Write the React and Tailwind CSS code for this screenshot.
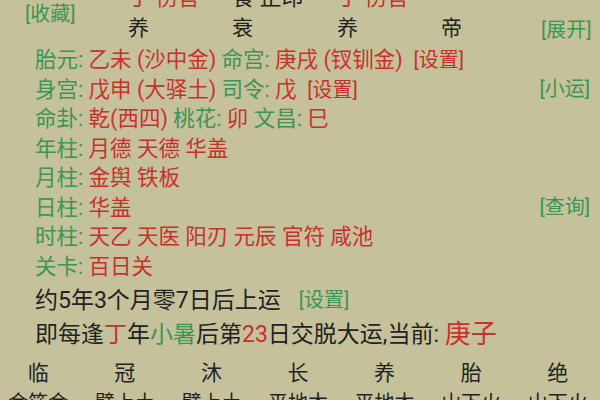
import React from "react";

const G = "text-[#3b9553]";
const R = "text-[#c9302b]";
const K = "text-[#222222]";

function Link({ children, className = "" }) {
  return <span className={`text-[20px] ${G} ${className}`}>[{children}]</span>;
}

function Row({ children, right }) {
  return (
    <div className="h-[29.5px] flex items-center justify-between pl-[35px] pr-[10px] leading-none text-[21.5px]">
      <div className="whitespace-pre">{children}</div>
      {right}
    </div>
  );
}

function L({ children }) {
  return <span className={G}>{children}</span>;
}
function V({ children }) {
  return <span className={R}>{children}</span>;
}

export default function App() {
  const pillars = [
    { top: "丁 伤官", topC: R, bot: "养" },
    { top: "食 正印", topC: K, bot: "衰" },
    { top: "丁 伤官", topC: R, bot: "养" },
    { top: "", topC: K, bot: "帝" },
  ];
  const stages = ["临", "冠", "沐", "长", "养", "胎", "绝"];
  const nayin = ["金箔金", "壁上土", "壁上土", "平地木", "平地木", "山下火", "山下火"];
  return (
    <div className="w-[600px] h-[400px] overflow-hidden bg-[#c5c29b] font-['Roboto','Noto_Sans_CJK_SC',sans-serif] text-[23px]">
      {/* header */}
      <div className="h-[45px] flex">
        <div className="w-[128px] pl-[25px] pt-[4px] leading-[20px]">
          <Link>收藏</Link>
        </div>
        {pillars.map((p, i) => (
          <div key={i} className={`${i === 3 ? "w-[100px]" : i === 1 ? "w-[105px]" : "w-[104px]"} flex flex-col`}>
            <div className={`-mt-[17px] h-[30px] leading-[30px] text-[22px] whitespace-nowrap ${p.topC}`}>{p.top}</div>
            <div className={`h-[30px] leading-[30px] text-[21px] ${K}`}>{p.bot}</div>
          </div>
        ))}
        <div className="pt-[20px] leading-[20px]">
          <Link>展开</Link>
        </div>
      </div>

      <Row>
        <L>胎元: </L>
        <V>乙未 (沙中金) </V>
        <L>命宫: </L>
        <V>庚戌 (钗钏金)  </V>
        <span className={`text-[20px] ${R}`}>[设置]</span>
      </Row>
      <Row right={<Link>小运</Link>}>
        <L>身宫: </L>
        <V>戊申 (大驿土) </V>
        <L>司令: </L>
        <V>戊  </V>
        <span className={`text-[20px] ${R}`}>[设置]</span>
      </Row>
      <Row>
        <L>命卦: </L>
        <V>乾(西四) </V>
        <L>桃花: </L>
        <V>卯 </V>
        <L>文昌: </L>
        <V>巳</V>
      </Row>
      <Row>
        <L>年柱: </L>
        <V>月德 天德 华盖</V>
      </Row>
      <Row>
        <L>月柱: </L>
        <V>金舆 铁板</V>
      </Row>
      <Row right={<Link>查询</Link>}>
        <L>日柱: </L>
        <V>华盖</V>
      </Row>
      <Row>
        <L>时柱: </L>
        <V>天乙 天医 阳刃 元辰 官符 咸池</V>
      </Row>
      <Row>
        <L>关卡: </L>
        <V>百日关</V>
      </Row>

      <div className={`mt-[2px] h-[34px] flex items-center pl-[35px] whitespace-nowrap leading-none ${K}`}>
        <span>约5年3个月零7日后上运</span>
        <Link className="ml-[18px]">设置</Link>
      </div>
      <div className={`h-[34px] flex items-center pl-[35px] whitespace-nowrap leading-none ${K}`}>
        <span>
          即每逢<span className={R}>丁</span>年<span className={G}>小暑</span>后第
          <span className={R}>23</span>日交脱大运,当前:&nbsp;
        </span>
        <span className={`text-[26px] ${R}`}>庚子</span>
      </div>

      <div className="-ml-[5px] w-[606px] mt-[7px] grid grid-cols-7">
        {stages.map((s, i) => (
          <div key={i} className={`h-[30px] leading-[30px] text-center text-[21px] ${K}`}>{s}</div>
        ))}
        {nayin.map((s, i) => (
          <div key={i} className={`h-[30px] leading-[30px] text-center text-[20px] ${K}`}>{s}</div>
        ))}
      </div>
    </div>
  );
}
